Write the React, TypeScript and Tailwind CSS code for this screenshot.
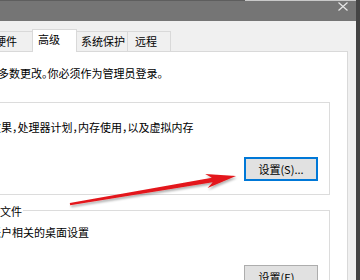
import React from 'react';

const CloseIcon: React.FC = () => (
  <svg width="10" height="9" viewBox="0 0 10 9" className="block">
    <path d="M0.5 0.5 L9.5 8.5 M9.5 0.5 L0.5 8.5" stroke="#e6e6e6" strokeWidth="1.2" fill="none" />
  </svg>
);

// red annotation arrow pointing at the settings button
const Arrow: React.FC = () => (
  <svg className="pointer-events-none absolute inset-0" width="360" height="280" viewBox="0 0 360 280">
    <defs>
      <filter id="shade" x="-10%" y="-50%" width="120%" height="200%">
        <feDropShadow dx="1" dy="2" stdDeviation="1.2" floodColor="#000" floodOpacity="0.3" />
      </filter>
    </defs>
    <polygon
      points="69.8,203 211.9,177.8 205.2,174.1 236,176 207.6,187.9 212.7,182.2 70.2,205.2"
      fill="#e3161a"
      filter="url(#shade)"
    />
  </svg>
);

export default function App() {
  return (
    <div className="relative flex h-[280px] w-[360px] overflow-hidden bg-[#f0f0f0] font-['Noto_Sans_CJK_SC',sans-serif] text-[11px] leading-[14px] text-black [font-feature-settings:'halt']">
      <div className="flex w-[356px] flex-col">
        <div className="flex h-px shrink-0">
          <div className="w-[245px] bg-[#5e5e5e]" />
          <div className="flex-1 bg-[#c9c9c9]" />
        </div>
        <div className="flex h-[20px] shrink-0 items-start justify-end bg-[#757575] pr-[8px] pt-[1px]">
          <CloseIcon />
        </div>

        {/* tabs */}
        <div className="flex h-[30px] shrink-0 items-end whitespace-nowrap">
          <div className="-ml-[12px] h-[20px] w-[46px] border border-b-0 border-[#d9d9d9] pl-[6px] pt-[2px]">硬件</div>
          <div className="relative z-10 -mb-px -ml-[2px] h-[23px] w-[45px] border border-b-0 border-[#d9d9d9] bg-white pl-[5px] pt-[2px]">
            高级
          </div>
          <div className="-ml-px h-[20px] w-[52px] border border-b-0 border-[#d9d9d9] pl-[4px] pt-[2px]">系统保护</div>
          <div className="-ml-px h-[20px] w-[44px] border border-b-0 border-[#d9d9d9] pl-[7px] pt-[2px]">远程</div>
        </div>

        {/* tab page */}
        <div className="mr-[8px] flex min-h-0 flex-1 flex-col overflow-hidden whitespace-nowrap border-t border-r border-[#d9d9d9] bg-white pr-[17px] pt-[14px]">
          <p className="-ml-[13px] shrink-0">大多数更改。你必须作为管理员登录。</p>

          <div className="-ml-[10px] mt-[22px] flex shrink-0 flex-col border border-[#dcdcdc] pb-[13px] pr-[11px] pt-[17px]">
            <p className="-ml-[23px]">视觉效果，处理器计划，内存使用，以及虚拟内存</p>
            <button className="mt-[23px] h-[24px] w-[74px] self-end border border-[#0078d7] bg-[#e1e1e1] shadow-[inset_0_0_0_1px_#0078d7]">
              设置(S)...
            </button>
          </div>

          <div className="-ml-[10px] mt-[15px] flex shrink-0 flex-col border border-[#dcdcdc] pr-[11px]">
            <span className="-ml-[35px] -mt-[7px] self-start bg-white pr-[1px]">用户配置文件</span>
            <p className="-ml-px mt-[7px]">账户相关的桌面设置</p>
            <button className="mt-[26px] h-[24px] w-[74px] shrink-0 self-end border border-[#adadad] bg-[#e1e1e1]">
              设置(E)...
            </button>
          </div>
        </div>
      </div>
      <div className="w-[4px] bg-[#444444]" />
      <Arrow />
    </div>
  );
}
